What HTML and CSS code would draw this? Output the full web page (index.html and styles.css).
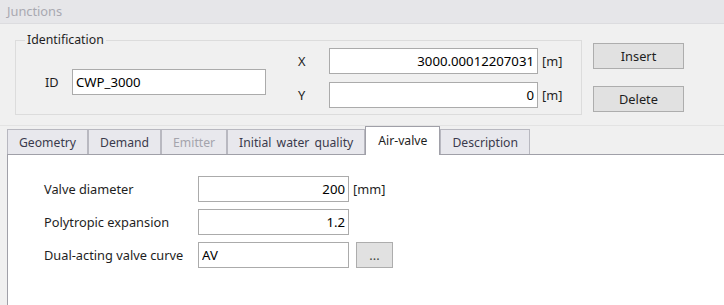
FILE: index.html
```html
<html>
<head>
    <title>Junctions</title>
    <link rel="stylesheet" href="styles.css">
</head>
<body>
    <div class="window">
        <div class="titlebar">Junctions</div>
        <section class="header">
            <fieldset class="group">
                <legend>Identification</legend>
                <div class="group-body">
                    <div class="id-field">
                        <span class="id-label">ID</span>
                        <input class="field id-input" type="text" value="CWP_3000">
                    </div>
                    <div class="coords">
                        <span class="coord-label">X</span>
                        <input class="field coord-input num" type="text" value="3000.00012207031">
                        <span class="unit">[m]</span>
                        <span class="coord-label">Y</span>
                        <input class="field coord-input num" type="text" value="0">
                        <span class="unit">[m]</span>
                    </div>
                </div>
            </fieldset>
            <div class="actions">
                <button class="btn">Insert</button>
                <button class="btn">Delete</button>
            </div>
        </section>
        <section class="tabs">
            <div class="tab">Geometry</div>
            <div class="tab">Demand</div>
            <div class="tab disabled">Emitter</div>
            <div class="tab">Initial water quality</div>
            <div class="tab active">Air-valve</div>
            <div class="tab">Description</div>
        </section>
        <section class="panel">
            <div class="form">
                <label class="form-label">Valve diameter</label>
                <input class="field form-input num" type="text" value="200">
                <span class="unit">[mm]</span>

                <label class="form-label">Polytropic expansion</label>
                <input class="field form-input num" type="text" value="1.2">
                <span></span>

                <label class="form-label">Dual-acting valve curve</label>
                <input class="field form-input" type="text" value="AV">
                <button class="btn btn-small">...</button>
            </div>
        </section>
    </div>
</body>
</html>
```

FILE: styles.css
```css
html, body {
    margin: 0;
    padding: 0;
    background: #f0f0f0;
    font-family: "Noto Sans", "Open Sans", sans-serif;
    font-size: 12.8px;
    color: #1e1e1e;
}

.window {
    width: 724px;
    height: 305px;
    display: flex;
    flex-direction: column;
    overflow: hidden;
}

.titlebar {
    height: 23px;
    line-height: 23px;
    padding-left: 7px;
    background: #e6e6e9;
    border-bottom: 1px solid #dcdcdf;
    color: #a9a9b1;
}

.header {
    display: flex;
    align-items: flex-start;
    padding: 8px 0 0 15px;
    height: 93px;
    border-bottom: 1px solid #e3e3e3;
}

.group {
    margin: 0;
    padding: 0 0 6px 0;
    width: 567px;
    box-sizing: border-box;
    border: 1px solid #dcdcdc;
    min-inline-size: 0;
}

.group legend {
    margin-left: 9px;
    padding: 0 2px;
    line-height: 16px;
    font-size: 12.3px;
}

.group-body {
    display: flex;
    align-items: flex-start;
    padding-left: 29px;
}

.id-field {
    display: flex;
    align-items: center;
    margin-top: 21px;
}

.id-label {
    width: 27px;
}

.id-input {
    width: 194px;
}

.coords {
    display: grid;
    grid-template-columns: 31px 209px auto;
    row-gap: 8px;
    align-items: center;
    margin-left: 32px;
}

.field {
    height: 26px;
    box-sizing: border-box;
    border: 1px solid #ababab;
    background: #fff;
    font-family: inherit;
    font-size: 13.2px;
    color: #000;
    padding: 0 3px;
    margin: 0;
    outline: none;
}

.num {
    text-align: right;
}

.unit {
    margin-left: 4px;
    color: #1e1e1e;
}

.actions {
    display: flex;
    flex-direction: column;
    gap: 17px;
    margin-left: 11px;
    margin-top: 11px;
}

.btn {
    width: 91px;
    height: 26px;
    background: #e1e1e1;
    border: 1px solid #adadad;
    font-family: inherit;
    font-size: 12.8px;
    color: #1e1e1e;
    padding: 0;
    margin: 0;
}

.btn-small {
    width: 37px;
    margin-left: 7px;
    color: #444;
}

.tabs {
    display: flex;
    align-items: flex-end;
    padding: 3px 0 0 7px;
    height: 25px;
}

.tab {
    height: 25px;
    line-height: 25px;
    box-sizing: border-box;
    padding: 0 11px;
    background: #e8e8ed;
    border: 1px solid #b8b8c0;
    border-bottom: none;
    font-size: 12.2px;
    word-spacing: 2px;
    color: #3a3a4c;
}

.tab.disabled {
    color: #a4a4ac;
}

.tab.active {
    height: 29px;
    line-height: 27px;
    margin-bottom: -1px;
    padding: 0 12px;
    background: #fff;
    border-color: #a0a0a8;
    color: #1e1e1e;
    position: relative;
    z-index: 1;
}

.panel {
    flex: 1;
    margin-left: 7px;
    background: #fff;
    border-top: 1px solid #a0a0a8;
    border-left: 1px solid #a0a0a8;
}

.form {
    display: grid;
    grid-template-columns: 154px 151px auto;
    row-gap: 7px;
    align-items: center;
    justify-items: start;
    padding: 21px 0 0 36px;
}

.form-input {
    width: 151px;
}
```
